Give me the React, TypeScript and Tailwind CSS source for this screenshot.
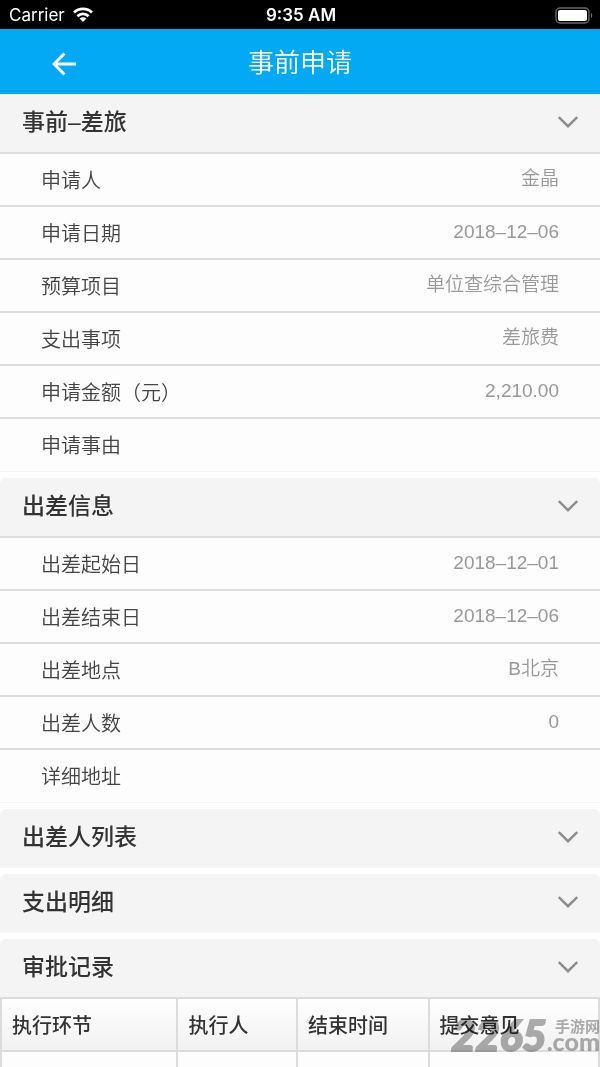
import React, { useState } from 'react';

interface Field {
  label: string;
  value: string;
}

interface SectionProps {
  title: string;
  fields?: Field[];
  children?: React.ReactNode;
}

const applyFields: Field[] = [
  { label: '申请人', value: '金晶' },
  { label: '申请日期', value: '2018–12–06' },
  { label: '预算项目', value: '单位查综合管理' },
  { label: '支出事项', value: '差旅费' },
  { label: '申请金额（元）', value: '2,210.00' },
  { label: '申请事由', value: '' },
];

const tripFields: Field[] = [
  { label: '出差起始日', value: '2018–12–01' },
  { label: '出差结束日', value: '2018–12–06' },
  { label: '出差地点', value: 'B北京' },
  { label: '出差人数', value: '0' },
  { label: '详细地址', value: '' },
];

const StatusBar: React.FC = () => (
  <div className="flex h-[29px] shrink-0 items-center bg-black pt-px pr-[7px] pl-[9px] font-['Inter',sans-serif] text-[17px] leading-none text-white">
    <div className="flex flex-1 items-center gap-2">
      <span>Carrier</span>
      <svg className="h-4 w-5" viewBox="0 0 20 16" fill="none" stroke="white" strokeWidth="2.8" aria-hidden="true">
        <path d="M1 5.600a12.800 12.800 0 0 1 18 0" />
        <path d="M4.400 9.200a8 8 0 0 1 11.200 0" />
        <path d="M10 15 6.600 11.600a4.800 4.800 0 0 1 6.800 0z" fill="white" stroke="none" />
      </svg>
    </div>
    <span className="font-semibold">9:35 AM</span>
    <div className="flex flex-1 justify-end">
      <svg className="h-[17px] w-[38px]" viewBox="0 0 38 17" aria-hidden="true">
        <rect x="1" y="1" width="33" height="15" rx="4" fill="none" stroke="#666" strokeWidth="1.4" />
        <rect x="3" y="3" width="29" height="11" rx="2" fill="white" />
        <path d="M36 6v5c1.600-.6 1.600-4.400 0-5z" fill="#777" />
      </svg>
    </div>
  </div>
);

const Section: React.FC<SectionProps> = ({ title, fields, children }) => {
  const [open, setOpen] = useState(true);
  return (
    <section className="group mb-[6px]">
      <h2>
        <button
          type="button"
          aria-expanded={open}
          onClick={() => setOpen(!open)}
          className="flex h-[58px] w-full items-center justify-between rounded-t-md bg-[#f4f4f4] px-[22px] pb-0.5 text-left text-[23px] font-medium text-[#333] group-first:rounded-none"
        >
          <span>{title}</span>
          <svg className="h-3 w-5" viewBox="0 0 20 12" fill="none" stroke="#8c8c8c" strokeWidth="2.4" aria-hidden="true">
            <path d="M.8 1 10 10.200 19.200 1" />
          </svg>
        </button>
      </h2>
      {open && fields && (
        <dl className="border-b border-[#f5f5f5] pb-px">
          {fields.map((f) => (
            <div key={f.label} className="flex h-[53px] items-start justify-between border-t-2 border-[#dedede] bg-[#fdfdfd] px-[41px]">
              <dt className="pt-[13px] text-[20px] leading-7 font-[350] text-[#444]">{f.label}</dt>
              <dd className="pt-[11px] text-[19px] leading-7 font-[350] text-[#999]">{f.value}</dd>
            </div>
          ))}
        </dl>
      )}
      {open && children}
      {!fields && !children && <div className="h-px rounded-b-md bg-[#f7f7f7]" />}
    </section>
  );
};

const App: React.FC = () => {
  return (
    <div className="relative flex h-screen flex-col overflow-hidden bg-white font-['Liberation_Sans','Noto_Sans_CJK_SC',sans-serif]">
      <StatusBar />
      <header className="grid h-[65px] shrink-0 grid-cols-[1fr_auto_1fr] items-center bg-[#03a9f4] text-white">
        <button type="button" aria-label="返回" className="ml-[52px] w-fit pt-1">
          <svg className="h-6 w-6" viewBox="0 0 24 24" fill="none" stroke="white" strokeWidth="3" aria-hidden="true">
            <path d="M24 12H3M12.500 1.500 2 12l10.500 10.500" />
          </svg>
        </button>
        <h1 className="pt-0.5 text-[26px] leading-none font-[350]">事前申请</h1>
      </header>
      <main className="min-h-0 flex-1 overflow-hidden bg-white">
        <Section title="事前–差旅" fields={applyFields} />
        <Section title="出差信息" fields={tripFields} />
        <Section title="出差人列表" />
        <Section title="支出明细" />
        <Section title="审批记录">
          <table className="w-full table-fixed border-collapse text-left text-[20px] leading-7 text-[#333]">
            <colgroup>
              <col className="w-[29.5%]" />
              <col className="w-[20%]" />
              <col className="w-[22%]" />
              <col />
            </colgroup>
            <thead>
              <tr className="h-[53px] bg-linear-to-b from-white to-[#f1f1f1]">
                <th className="border-2 border-[#dcdcdc] pt-0.5 pl-[10px] font-medium">执行环节</th>
                <th className="border-2 border-[#dcdcdc] pt-0.5 pl-[10px] font-medium">执行人</th>
                <th className="border-2 border-[#dcdcdc] pt-0.5 pl-[10px] font-medium">结束时间</th>
                <th className="border-2 border-[#dcdcdc] pt-0.5 pl-[10px] font-medium">提交意见</th>
              </tr>
            </thead>
            <tbody>
              <tr className="h-[53px] bg-[#fdfdfd] font-[350] text-[#777]">
                <td className="border-2 border-[#dcdcdc] pl-[10px]">申请人</td>
                <td className="border-2 border-[#dcdcdc] pl-[10px]">金晶</td>
                <td className="border-2 border-[#dcdcdc] pl-[10px]"></td>
                <td className="border-2 border-[#dcdcdc] pl-[10px]">【提交】</td>
              </tr>
            </tbody>
          </table>
        </Section>
      </main>
      <div className="pointer-events-none absolute right-0 bottom-4 flex items-end text-[#afafaf] mix-blend-multiply">
        <span className="font-['Lato','Liberation_Sans',sans-serif] text-[42px] leading-8 font-black italic [-webkit-text-stroke:2px_#afafaf]">2265</span>
        <span className="flex flex-col items-end pb-1">
          <span className="text-[15px] leading-4 font-bold">手游网</span>
          <span className="font-['Lato','Liberation_Sans',sans-serif] text-[25px] leading-3 font-black">.com</span>
        </span>
      </div>
    </div>
  );
};

export default App;
